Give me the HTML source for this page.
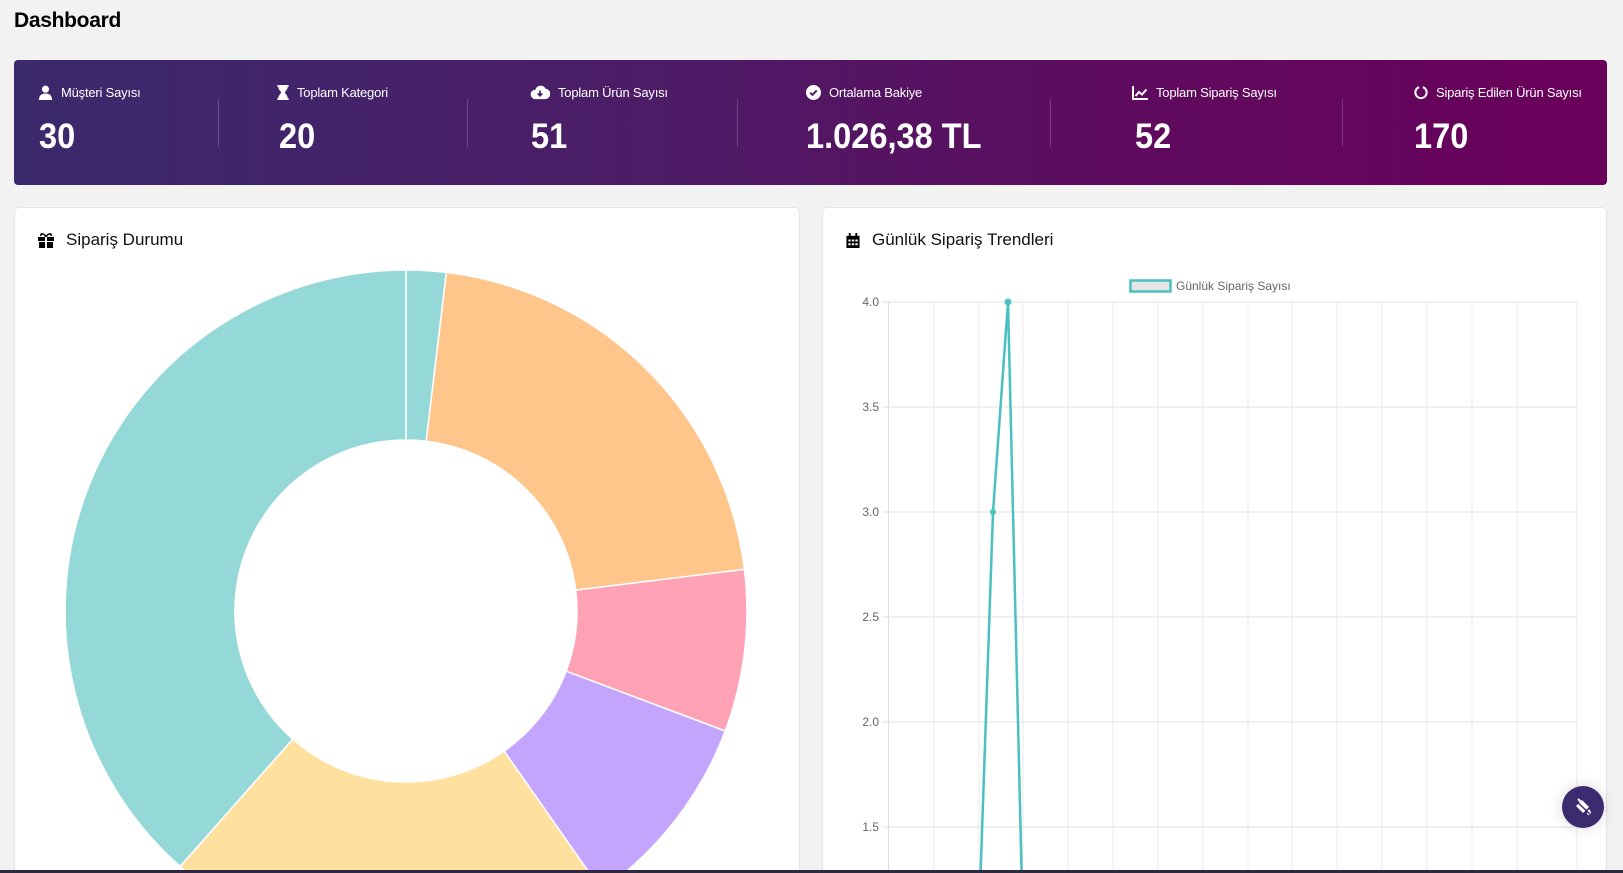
<!DOCTYPE html>
<html><head><meta charset="utf-8"><style>
*{margin:0;padding:0;box-sizing:border-box}
body{width:1623px;height:873px;overflow:hidden;background:#f2f2f2;font-family:"Liberation Sans",sans-serif;position:relative}
h1{position:absolute;left:14px;top:9px;font-size:21px;font-weight:bold;color:#000;letter-spacing:-0.3px}
.banner{position:absolute;left:14px;top:60px;width:1593px;height:125px;border-radius:4px;background:linear-gradient(90deg,#3b2a6d 0%,#4c1c66 40%,#5e0b5e 70%,#6a005a 100%)}
.st{position:absolute;top:0;color:#fff}
.st .l{position:absolute;top:25px;white-space:nowrap;font-size:13px;display:flex;align-items:center;gap:8px;letter-spacing:-0.2px}
.st .n{position:absolute;top:57px;font-size:35px;font-weight:bold;white-space:nowrap;transform:scaleX(0.93);transform-origin:left}
.dv{position:absolute;top:39px;width:1px;height:48px;background:rgba(255,255,255,0.2)}
.card{position:absolute;top:207px;height:666px;background:#fff;border:1px solid #e3e3ea;border-radius:5px}
.ct{position:absolute;top:22px;font-family:"Liberation Sans",sans-serif;font-size:17px;color:#111;display:flex;align-items:center;gap:12px}
.bar{position:absolute;left:0;top:870px;width:1623px;height:3px;background:#2d2740}
.fab{position:absolute;left:1562px;top:786px;width:42px;height:42px;border-radius:50%;background:#3d2b6f;box-shadow:0 0 14px rgba(0,0,0,0.15)}
</style></head><body>
<h1>Dashboard</h1>
<div class="banner">
 <div class="st" style="left:24px"><div class="l"><svg width="15" height="15" viewBox="0 0 16 16" fill="#fff"><circle cx="8" cy="4.5" r="3.8"/><path d="M1 16c0-5 3-7 7-7s7 2 7 7z"/></svg>Müşteri Sayısı</div><div class="n" style="left:1px">30</div></div>
 <div class="dv" style="left:204px"></div>
 <div class="st" style="left:263px"><div class="l"><svg width="12" height="15" viewBox="0 0 12 16" fill="#fff"><path d="M0 0h12v2h-1c0 3-3 5-3 6s3 3 3 6h1v2H0v-2h1c0-3 3-5 3-6S1 5 1 2H0z"/></svg>Toplam Kategori</div><div class="n" style="left:2px">20</div></div>
 <div class="dv" style="left:453px"></div>
 <div class="st" style="left:516px"><div class="l"><svg width="20" height="15" viewBox="0 0 20 16" fill="#fff"><path d="M5 15a5 5 0 010-10 6 6 0 0111-1 5 5 0 01-1 11z"/><path d="M10 6v5M7.5 9l2.5 2.5L12.5 9" stroke="#4a2068" stroke-width="1.8" fill="none"/></svg>Toplam Ürün Sayısı</div><div class="n" style="left:1px">51</div></div>
 <div class="dv" style="left:723px"></div>
 <div class="st" style="left:792px"><div class="l"><svg width="15" height="15" viewBox="0 0 16 16"><circle cx="8" cy="8" r="8" fill="#fff"/><path d="M4.5 8.2l2.4 2.4 4.6-4.8" stroke="#521769" stroke-width="2" fill="none"/></svg>Ortalama Bakiye</div><div class="n" style="left:0">1.026,38 TL</div></div>
 <div class="dv" style="left:1036px"></div>
 <div class="st" style="left:1118px"><div class="l"><svg width="16" height="14" viewBox="0 0 16 14" fill="none" stroke="#fff" stroke-width="2"><path d="M1 0v13h15"/><path d="M3.5 10l3.5-4 3 2.5 4.5-5"/></svg>Toplam Sipariş Sayısı</div><div class="n" style="left:3px">52</div></div>
 <div class="dv" style="left:1328px"></div>
 <div class="st" style="left:1400px"><div class="l"><svg width="14" height="15" viewBox="0 0 14 16" fill="none" stroke="#fff" stroke-width="2.2"><path d="M9 2.3A6 6 0 1 1 5 2.3"/></svg>Sipariş Edilen Ürün Sayısı</div><div class="n" style="left:0">170</div></div>
</div>

<div class="card" style="left:14px;width:786px;overflow:hidden">
 <div class="ct" style="left:23px"><svg width="16" height="15" viewBox="0 0 16 15" fill="#000"><path d="M0 4h16v4H0zM1 9h6v6H1zM9 9h6v6H9z"/><path d="M8 4C6 0 2 0 3 3M8 4c2-4 6-4 5-1" stroke="#000" stroke-width="1.6" fill="none"/><rect x="7" y="4" width="2" height="11" fill="#fff"/></svg>Sipariş Durumu</div>
</div>
<svg style="position:absolute;left:0;top:0" width="1623" height="873">
 <defs><clipPath id="c1"><rect x="15" y="208" width="784" height="662"/></clipPath><clipPath id="c2"><rect x="823" y="208" width="783" height="662"/></clipPath></defs>
 <g clip-path="url(#c1)" stroke="#fff" stroke-width="1.5">
  <path d="M406 270 A341 341 0 0 1 446.4 272.4 L426.2 441.2 A171 171 0 0 0 406 440Z" fill="#94d8d8"/>
  <path d="M446.4 272.4 A341 341 0 0 1 744.4 569.4 L575.7 590.2 A171 171 0 0 0 426.2 441.2Z" fill="#ffc68c"/>
  <path d="M744.4 569.4 A341 341 0 0 1 725.2 731 L566.1 671.2 A171 171 0 0 0 575.7 590.2Z" fill="#ffa2b6"/>
  <path d="M725.2 731 A341 341 0 0 1 601.6 890.4 L504.1 751.1 A171 171 0 0 0 566.1 671.2Z" fill="#c4a5fd"/>
  <path d="M601.6 890.4 A341 341 0 0 1 180.1 866.4 L292.7 739.1 A171 171 0 0 0 504.1 751.1Z" fill="#ffe09e"/>
  <path d="M180.1 866.4 A341 341 0 0 1 406 270 L406 440 A171 171 0 0 0 292.7 739.1Z" fill="#94d8d8"/>
 </g>
</svg>
<div class="card" style="left:822px;width:785px">
 <div class="ct" style="left:23px"><svg width="14" height="15" viewBox="0 0 14 16" fill="#000"><path d="M0 3h14v13H0z"/><rect x="2.5" y="0" width="2" height="4"/><rect x="9.5" y="0" width="2" height="4"/><g fill="#fff"><rect x="2" y="7" width="2.5" height="2"/><rect x="5.8" y="7" width="2.5" height="2"/><rect x="9.5" y="7" width="2.5" height="2"/><rect x="2" y="11" width="2.5" height="2"/><rect x="5.8" y="11" width="2.5" height="2"/><rect x="9.5" y="11" width="2.5" height="2"/></g></svg>Günlük Sipariş Trendleri</div>
</div>
<svg style="position:absolute;left:0;top:0" width="1623" height="873">
 <g clip-path="url(#c2)">
  <g stroke="#ebebeb" stroke-width="1">
   <path d="M934 302V873M979 302V873M1023 302V873M1068 302V873M1113 302V873M1158 302V873M1203 302V873M1248 302V873M1292 302V873M1337 302V873M1382 302V873M1427 302V873M1472 302V873M1517 302V873M1577 302V873"/>
   <path d="M882 302H1577M882 407H1577M882 512H1577M882 617H1577M882 722H1577M882 827H1577" stroke="#e0e0e0"/>
  </g>
  <path d="M888.5 302V873" stroke="#ddd"/>
  <g font-family="Liberation Sans,sans-serif" font-size="12" fill="#666" text-anchor="end">
   <text x="879" y="306">4.0</text><text x="879" y="411">3.5</text><text x="879" y="516">3.0</text><text x="879" y="621">2.5</text><text x="879" y="726">2.0</text><text x="879" y="831">1.5</text>
  </g>
  <rect x="1130.5" y="280.5" width="40" height="11" fill="#e6e6e6" stroke="#4bc0c0" stroke-width="2.5"/>
  <text x="1176" y="290" font-family="Liberation Sans,sans-serif" font-size="12" fill="#666">Günlük Sipariş Sayısı</text>
  <polyline points="980,890 993,512 1008,302 1022,890" fill="none" stroke="#4bc0c0" stroke-width="2.5"/>
  <circle cx="993" cy="512" r="3" fill="#4bc0c0"/><circle cx="1008" cy="302" r="3.5" fill="#4bc0c0"/>
 </g>
</svg>
<div class="fab"><svg style="position:absolute;left:11px;top:11px" width="20" height="20" viewBox="0 0 20 20" fill="#fff"><path d="M3 9l6-6 7 7-6 6z"/><path d="M5 2l4 4" stroke="#fff" stroke-width="2"/><path d="M16 12c1.5 2 2 3 2 4a2 2 0 01-4 0c0-1 .5-2 2-4z"/><path d="M2 3l16 15" stroke="#3d2b6f" stroke-width="1.5"/></svg></div>
<div class="bar"></div>
</body></html>
